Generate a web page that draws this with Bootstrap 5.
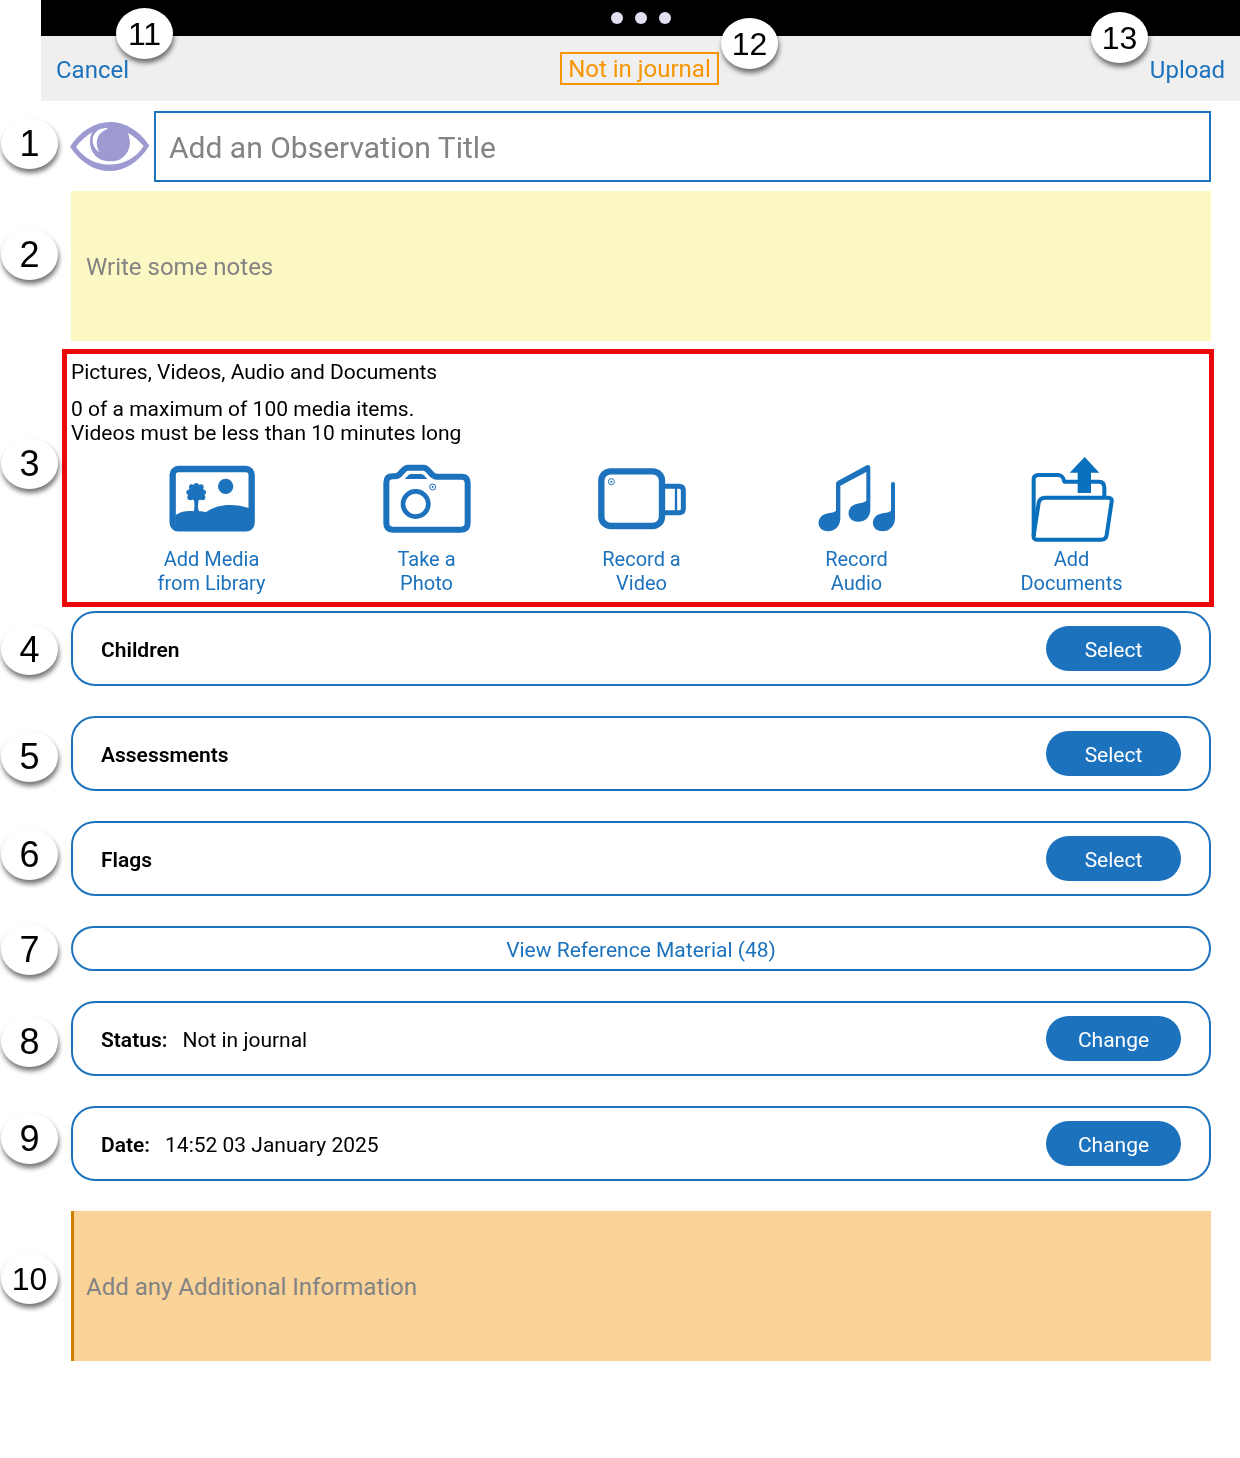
<!DOCTYPE html>
<html lang="en">
<head>
<meta charset="utf-8">
<meta name="viewport" content="width=device-width, initial-scale=1">
<title>New observation</title>
<link href="https://cdn.jsdelivr.net/npm/bootstrap@5.3.0/dist/css/bootstrap.min.css" rel="stylesheet">
<style>
:root { --brand: #1c72bd; --accent: #f79400; --hint: #838383; }
body { font-family: Roboto, "Noto Sans", sans-serif; font-size: 21px; line-height: 24px; color: #000; background: #fff; }
.app-shell { margin-left: 41px; min-height: 100vh; }
.system-bar { height: 36px; gap: 12px; }
.system-dot { width: 12px; height: 12px; background: #e2dff1; }
.app-header { height: 65px; padding: 2px 15px 0; background: #efefef; font-size: 24px; line-height: 28px; }
.brand-link { color: var(--brand); text-decoration: none; }
.state-tag { color: var(--accent); border: 2px solid var(--accent); padding: 1px 6px 0; margin-bottom: 2px; line-height: 29px; height: 33px; }
.form-area { padding: 10px 29px 30px 30px; }
.eye-icon { width: 80px; height: 51px; margin: 0 4px 0 -1px; }
.title-input { height: 71px; border: 2px solid var(--brand); font-size: 30px; padding: 2px 13px 0; color: #000; }
.note-box { height: 150px; font-size: 24px; line-height: 28px; padding: 62px 15px; color: #000; resize: none; outline: 0; }
.note-plain { background: #fcf8c3; margin-top: 9px; }
.note-extra { background: #fad399; border-left: 3px solid #cf7e00 !important; padding-left: 12px; }
.title-input::placeholder, .note-box::placeholder { color: var(--hint); opacity: 1; }
.media-panel { border: 5px solid #ec0808; margin: 8px -3px 4px -9px; padding: 6px 0 7px 4px; }
.media-heading { margin-bottom: 13px; }
.media-actions { padding: 12px 30px 0 33px; }
.media-action { flex: 1 1 0; font-size: 20px; color: var(--brand); }
.media-action svg { width: 90px; height: 90px; }
.panel-stack { gap: 30px; }
.panel-row { min-height: 75px; border: 2px solid var(--brand); border-radius: 24px; padding: 0 28px; }
.row-text { padding-top: 2px; }
.pill-btn { width: 135px; height: 45px; border-radius: 23px; background: var(--brand); color: #fff; padding: 2px 0 0; }
.ref-btn { height: 45px; border: 2px solid var(--brand); border-radius: 23px; background: #fff; color: var(--brand); padding: 2px 0 0; }
.row-value { margin-left: 15px; }
.strong-label { font-weight: 600; }

/* numbered callouts pinned over the form */
.callout { position: absolute; width: 57px; height: 51px; left: 1px; border-radius: 50%; background: #fff; box-shadow: 1px 4px 5px rgba(0,0,0,.55); font: 36px/52px "Liberation Sans", Arial, sans-serif; text-align: center; }
.callout-two { font-size: 32px; }
.at-title { top: 118px; }
.at-notes { top: 229px; }
.at-media { top: 438px; }
.at-children { top: 624px; }
.at-assess { top: 731px; }
.at-flags { top: 829px; }
.at-ref { top: 924px; }
.at-status { top: 1016px; }
.at-date { top: 1113px; }
.at-extra { top: 1253px; }
.at-cancel { top: 8px; left: 116px; }
.at-state { top: 18px; left: calc(50% + 101px); }
.at-upload { top: 12px; left: auto; right: 92px; }
</style>
<script src="https://cdn.jsdelivr.net/npm/bootstrap@5.3.0/dist/js/bootstrap.bundle.min.js"></script>
</head>
<body class="position-relative">
<div class="app-shell">
  <div class="system-bar bg-black d-flex justify-content-center align-items-center">
    <span class="system-dot rounded-circle"></span><span class="system-dot rounded-circle"></span><span class="system-dot rounded-circle"></span>
  </div>
  <header class="app-header d-flex justify-content-between align-items-center">
    <a href="#" class="brand-link">Cancel</a>
    <span class="state-tag">Not in journal</span>
    <a href="#" class="brand-link">Upload</a>
  </header>

  <main class="form-area">
    <div class="d-flex align-items-center">
      <svg class="eye-icon flex-shrink-0" viewBox="210 363 240 153" aria-hidden="true">
        <path d="M210 440C275 342 384 342 448 437C384 538 275 538 210 440Z" fill="#9c9ad1"/>
        <path d="M277 396C262 430 274 466 304 479C324 487 350 485 362 477C388 460 395 428 384 398C403 409 418 423 431 438C385 512 275 512 228 440C242 423 257 408 277 396Z" fill="#fff"/>
        <circle cx="339" cy="430" r="50" fill="#9c9ad1"/>
        <path d="M277 396C262 430 274 462 304 479L340 470L300 458C280 430 286 390 322 384L340 372L300 372Z" fill="#9c9ad1"/>
        <path d="M322 384C274 382 264 434 299 457C282 430 290 398 322 387Z" fill="#fff"/>
      </svg>
      <input type="text" class="title-input form-control rounded-0 shadow-none" placeholder="Add an Observation Title" aria-label="Observation title">
    </div>
    <textarea class="note-box note-plain d-block w-100 border-0" placeholder="Write some notes" aria-label="Notes"></textarea>

    <section class="media-panel">
      <div class="media-heading">Pictures, Videos, Audio and Documents</div>
      <div>0 of a maximum of 100 media items.</div>
      <div>Videos must be less than 10 minutes long</div>
      <div class="media-actions d-flex">
        <button type="button" class="media-action border-0 bg-transparent p-0">
          <svg class="d-block mx-auto" viewBox="78 21 270 270" aria-hidden="true">
            <rect x="95" y="57" width="237" height="178" rx="17" fill="none" stroke="currentColor" stroke-width="19"/>
            <path d="M103 196C116 186 135 181 158 184C161 176 161 166 159 150H173C170 166 170 176 174 184C181 183 187 184 194 187C226 162 279 158 326 175V238H103Z" fill="currentColor"/>
            <g fill="currentColor"><circle cx="254" cy="109" r="23"/><circle cx="166" cy="128" r="24"/><circle cx="166" cy="107" r="8"/><circle cx="152" cy="111" r="8"/><circle cx="180" cy="111" r="8"/><circle cx="144" cy="127" r="8"/><circle cx="187" cy="127" r="8"/><circle cx="148" cy="142" r="9"/><circle cx="184" cy="142" r="9"/></g>
          </svg>
          Add Media<br>from Library
        </button>
        <button type="button" class="media-action border-0 bg-transparent p-0">
          <svg class="d-block mx-auto" viewBox="723 21 270 270" aria-hidden="true">
            <path d="M755 79H762C775 79 776 72 783 65C790 58 793 53 800 53H848C856 53 861 60 867 67C874 76 878 80 888 80H961Q980 80 980 99V220Q980 239 961 239H755Q736 239 736 220V98Q736 79 755 79Z" fill="none" stroke="currentColor" stroke-width="18" stroke-linejoin="round"/>
            <path d="M791 87L802 76Q806 72 812 72H840Q846 72 850 77L859 87Z" fill="currentColor"/>
            <circle cx="824" cy="162" r="38" fill="none" stroke="currentColor" stroke-width="14"/>
            <circle cx="875" cy="111" r="9" fill="none" stroke="currentColor" stroke-width="3"/><circle cx="875" cy="111" r="3" fill="currentColor"/>
          </svg>
          Take a<br>Photo
        </button>
        <button type="button" class="media-action border-0 bg-transparent p-0">
          <svg class="d-block mx-auto" viewBox="78 21 270 270" aria-hidden="true">
            <rect x="91" y="64" width="182" height="164" rx="28" fill="none" stroke="currentColor" stroke-width="19"/>
            <path d="M281 109H324Q337 109 337 121V176Q337 188 324 188H281" fill="none" stroke="currentColor" stroke-width="15"/>
            <path d="M315 114V183" fill="none" stroke="currentColor" stroke-width="7"/>
            <circle cx="121" cy="95" r="9" fill="none" stroke="currentColor" stroke-width="3"/><circle cx="121" cy="95" r="3" fill="currentColor"/>
          </svg>
          Record a<br>Video
        </button>
        <button type="button" class="media-action border-0 bg-transparent p-0">
          <svg class="d-block mx-auto" viewBox="723 21 270 270" aria-hidden="true">
            <g fill="currentColor"><path d="M795 101Q795 96 800 93L887 46Q897 43 898 54V178C898 202 881 216 862 215C831 215 825 184 842 169C856 157 874 162 886 152V66L808 107V205C808 229 791 244 772 244C741 244 735 213 752 198C767 186 784 192 795 182Z"/>
            <path d="M960 101Q960 96 966 96Q972 96 972 101V205C972 230 954 244 935 244C904 244 898 213 915 198C930 186 949 192 960 182Z"/></g>
          </svg>
          Record<br>Audio
        </button>
        <button type="button" class="media-action border-0 bg-transparent p-0">
          <svg class="d-block mx-auto" viewBox="138 51 270 270" aria-hidden="true">
            <g fill="none" stroke="#0870bd" stroke-width="12" stroke-linejoin="round"><path d="M158 288V119Q158 105 172 105H231C246 105 247 116 250 125H354Q370 125 370 143V170"/>
            <path d="M192 173H381Q394 173 392 184L377 285Q375 299 361 299H168Q156 299 158 286L173 189Q176 173 192 173Z"/></g>
            <path d="M311 51L355 98H330V159H290V98H266Z" fill="#0870bd"/>
          </svg>
          Add<br>Documents
        </button>
      </div>
    </section>

    <div class="panel-stack d-flex flex-column">
      <div class="panel-row d-flex justify-content-between align-items-center">
        <span class="row-text strong-label">Children</span><button type="button" class="pill-btn border-0">Select</button>
      </div>
      <div class="panel-row d-flex justify-content-between align-items-center">
        <span class="row-text strong-label">Assessments</span><button type="button" class="pill-btn border-0">Select</button>
      </div>
      <div class="panel-row d-flex justify-content-between align-items-center">
        <span class="row-text strong-label">Flags</span><button type="button" class="pill-btn border-0">Select</button>
      </div>
      <button type="button" class="ref-btn w-100">View Reference Material (48)</button>
      <div class="panel-row d-flex align-items-center">
        <span class="row-text strong-label">Status:</span><span class="row-text row-value">Not in journal</span><button type="button" class="pill-btn border-0 ms-auto">Change</button>
      </div>
      <div class="panel-row d-flex align-items-center">
        <span class="row-text strong-label">Date:</span><span class="row-text row-value">14:52 03 January 2025</span><button type="button" class="pill-btn border-0 ms-auto">Change</button>
      </div>
      <textarea class="note-box note-extra d-block w-100 border-0" placeholder="Add any Additional Information" aria-label="Additional information"></textarea>
    </div>
  </main>
</div>

<span class="callout at-title">1</span>
<span class="callout at-notes">2</span>
<span class="callout at-media">3</span>
<span class="callout at-children">4</span>
<span class="callout at-assess">5</span>
<span class="callout at-flags">6</span>
<span class="callout at-ref">7</span>
<span class="callout at-status">8</span>
<span class="callout at-date">9</span>
<span class="callout callout-two at-extra">10</span>
<span class="callout callout-two at-cancel">11</span>
<span class="callout callout-two at-state">12</span>
<span class="callout callout-two at-upload">13</span>
</body>
</html>
